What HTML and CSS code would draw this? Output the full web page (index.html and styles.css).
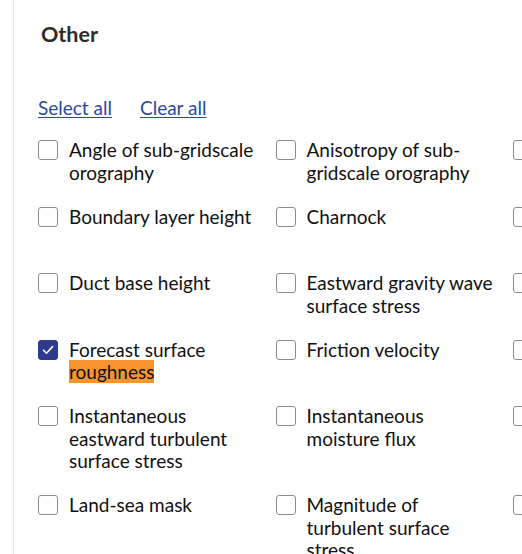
FILE: index.html
```html
<!DOCTYPE html>
<html lang="en">
<head>
<meta charset="utf-8">
<title>Other</title>
<link rel="stylesheet" href="styles.css">
</head>
<body>
<section class="panel">
  <h2 class="title">Other</h2>
  <div class="actions">
    <a href="#" class="link">Select all</a>
    <a href="#" class="link">Clear all</a>
  </div>
  <div class="grid">
    <label class="item"><span class="box"></span><span class="text">Angle of sub-gridscale orography</span></label>
    <label class="item"><span class="box"></span><span class="text">Anisotropy of sub-gridscale orography</span></label>
    <label class="item"><span class="box"></span><span class="text">Benjamin-Feir index</span></label>

    <label class="item"><span class="box"></span><span class="text">Boundary layer height</span></label>
    <label class="item"><span class="box"></span><span class="text">Charnock</span></label>
    <label class="item"><span class="box"></span><span class="text">Convective available potential energy</span></label>

    <label class="item"><span class="box"></span><span class="text">Duct base height</span></label>
    <label class="item"><span class="box"></span><span class="text">Eastward gravity wave surface stress</span></label>
    <label class="item"><span class="box"></span><span class="text">Eastward turbulent surface stress</span></label>

    <label class="item"><span class="box checked"><svg viewBox="0 0 20 20" width="20" height="20"><path d="M5.5 10.2l3 3 6-6.6" fill="none" stroke="#fff" stroke-width="1.6" stroke-linecap="round" stroke-linejoin="round"/></svg></span><span class="text">Forecast surface <mark class="hl">roughness</mark></span></label>
    <label class="item"><span class="box"></span><span class="text">Friction velocity</span></label>
    <label class="item"><span class="box"></span><span class="text">Gravity wave dissipation</span></label>

    <label class="item"><span class="box"></span><span class="text">Instantaneous eastward turbulent surface stress</span></label>
    <label class="item"><span class="box"></span><span class="text">Instantaneous moisture flux</span></label>
    <label class="item"><span class="box"></span><span class="text">Instantaneous northward turbulent surface stress</span></label>

    <label class="item"><span class="box"></span><span class="text">Land-sea mask</span></label>
    <label class="item"><span class="box"></span><span class="text">Magnitude of turbulent surface stress</span></label>
    <label class="item"><span class="box"></span><span class="text">Mean vertical gradient of orography</span></label>
  </div>
</section>
</body>
</html>
```

FILE: styles.css
```css
html, body {
  margin: 0;
  padding: 0;
  background: #fff;
  overflow: hidden;
}
body {
  font-family: Lato, "Noto Sans", sans-serif;
  color: #1b1b1b;
  width: 522px;
  height: 554px;
}
.panel {
  margin-left: 13px;
  border-left: 1px solid #e3e1ee;
  padding: 21px 0 0 24px;
  height: 554px;
  box-sizing: border-box;
  overflow: hidden;
}
.title {
  margin: 0;
  padding-left: 3px;
  font-size: 21.5px;
  line-height: 26px;
  font-weight: 700;
  color: #2c2c2c;
}
.actions {
  margin-top: 49.5px;
  display: flex;
  gap: 28px;
  font-size: 19px;
  line-height: 22.5px;
}
.link {
  color: #2a4a9c;
  text-decoration: underline;
  text-underline-offset: 2px;
  text-decoration-thickness: 1px;
}
.grid {
  margin-top: 20px;
  display: grid;
  grid-template-columns: repeat(3, 222px);
  column-gap: 15.5px;
  row-gap: 21.5px;
  font-size: 19px;
  line-height: 22.5px;
}
.item {
  display: flex;
  align-items: flex-start;
  gap: 11px;
}
.box {
  flex: 0 0 auto;
  width: 20px;
  height: 20px;
  margin-top: 1px;
  box-sizing: border-box;
  border: 1px solid #8d8d8d;
  border-radius: 3px;
  background: #fff;
  display: flex;
}
.box.checked {
  background: #2c3b8c;
  border-color: #2c3b8c;
}
.box svg {
  margin: -1px;
}
.text {
  flex: 1 1 auto;
  color: #111;
}
.hl {
  background: #f7942d;
  color: inherit;
}
```
